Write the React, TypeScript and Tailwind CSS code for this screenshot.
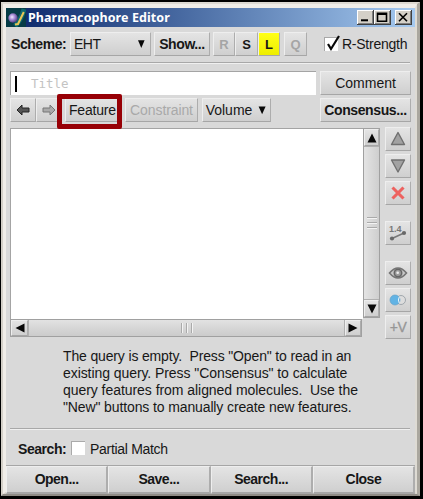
import React from "react";

const raised =
  "flex shrink-0 items-center justify-center whitespace-nowrap border border-t-[#eeeeee] border-l-[#eeeeee] border-r-[#adadad] border-b-[#a6a6a6] bg-linear-to-b from-[#e4e4e4] to-[#cfcfcf]";

function Btn({ className = "", children }: { className?: string; children?: React.ReactNode }) {
  return <div className={`${raised} ${className}`}>{children}</div>;
}

function Divider() {
  return <div className="ml-[4px] h-[2px] w-[400px] border-t border-b border-t-[#a8a8a8] border-b-[#f0f0f0]" />;
}

function Triangle({ d, className = "" }: { d: string; className?: string }) {
  return (
    <svg className={className} width="10" height="10" viewBox="0 0 10 10">
      <path d={d} fill="#080808" />
    </svg>
  );
}

function TitleBar() {
  return (
    <div className="flex h-[19px] w-[409px] items-center bg-linear-to-r from-[#0b2568] to-[#a6caf0]">
      <svg width="20" height="19" viewBox="0 0 20 19" className="shrink-0">
        <defs>
          <radialGradient id="ball" cx=".4" cy=".4" r=".65">
            <stop offset="0" stopColor="#f1e9ff" />
            <stop offset=".45" stopColor="#a58bd4" />
            <stop offset="1" stopColor="#493778" />
          </radialGradient>
        </defs>
        <rect width="20" height="19" fill="#063c46" />
        <path d="M9 18c5-5 7-9 9-17" stroke="#0d6770" strokeWidth="5" fill="none" />
        <circle cx="7" cy="10" r="4.7" fill="url(#ball)" />
        <path d="M9 16.5L12 16 17.8 4" stroke="#e8c655" strokeWidth="2" fill="none" />
      </svg>
      <span className="ml-[2px] w-[146px] whitespace-nowrap font-['Noto_Sans',sans-serif] text-[12.5px] leading-[19px] font-bold tracking-[0.08px] text-white">
        Pharmacophore Editor
      </span>
      <div className="ml-auto mr-[3px] flex">
        {["M4 11h7", "M3.5 4h9v8h-9zM3 5h10", "M4 4l8 8M12 4l-8 8"].map((d, i) => (
          <svg key={d} width="17" height="15" viewBox="0 0 17 15" className={i === 2 ? "ml-[4px]" : ""}>
            <rect width="17" height="15" fill="#404040" />
            <rect width="16" height="14" fill="#fff" />
            <rect x="1" y="1" width="15" height="13" fill="#808080" />
            <rect x="1" y="1" width="14" height="12" fill="#d4d0c8" />
            <path d={d} transform="translate(0 -.7)" stroke="#000" strokeWidth={i === 0 ? 2 : 1.6} fill="none" />
          </svg>
        ))}
      </div>
    </div>
  );
}

function SideTools() {
  const size = "h-[24px] w-[26px]";
  return (
    <div className="ml-[5px] flex w-[26px] flex-col gap-[3px]">
      <Btn className={size}>
        <svg width="18" height="16" viewBox="0 0 18 16"><path d="M9 1.5L15.5 13.5h-13z" fill="#a2a2a2" stroke="#707070" strokeWidth="1.4" strokeLinejoin="round" /></svg>
      </Btn>
      <Btn className={size}>
        <svg width="18" height="16" viewBox="0 0 18 16"><path d="M9 14L2.5 2h13z" fill="#a2a2a2" stroke="#707070" strokeWidth="1.4" strokeLinejoin="round" /></svg>
      </Btn>
      <Btn className={size}>
        <svg width="16" height="16" viewBox="0 0 16 16"><path d="M2.5 2.5l11 11M13.5 2.5l-11 11" stroke="#ed625f" strokeWidth="3.1" /></svg>
      </Btn>
      <Btn className={`${size} mt-[13px]`}>
        <svg width="22" height="20" viewBox="0 0 22 20">
          <path d="M5 15.5L17 10" stroke="#777" strokeWidth="1.4" />
          <circle cx="5" cy="15.5" r="2.1" fill="#686868" /><circle cx="17" cy="10" r="2.1" fill="#686868" />
          <text x="2" y="9" className="font-['Liberation_Sans',sans-serif] text-[9px] font-bold" fill="#777">1.4</text>
        </svg>
      </Btn>
      <Btn className={`${size} mt-[13px]`}>
        <svg width="20" height="16" viewBox="0 0 20 16">
          <path d="M1.5 8Q10-2 18.5 8Q10 18 1.5 8z" fill="#c9c9c9" stroke="#747474" strokeWidth="1.6" />
          <circle cx="10" cy="8" r="3.7" fill="#9d9d9d" stroke="#666" strokeWidth="1.6" /><circle cx="9.7" cy="7.7" r="1.3" fill="#eee" />
        </svg>
      </Btn>
      <Btn className={size}>
        <svg width="20" height="16" viewBox="0 0 20 16">
          <circle cx="13" cy="8" r="4.5" fill="#ddd" stroke="#a0a7ad" /><circle cx="7" cy="8" r="5" fill="#62b3e4" stroke="#66a2c8" strokeWidth=".7" />
          <path d="M11.3 4.8Q9.5 8 11.3 11.2" stroke="#eef5f9" fill="none" />
        </svg>
      </Btn>
      <Btn className={`${size} text-[14px] tracking-[-0.6px] text-[#969696] [-webkit-text-stroke:0.3px]`}>+V</Btn>
    </div>
  );
}

export default function App() {
  return (
    <div className="flex h-[499px] w-[423px] bg-black pt-[2px] pl-[1px] font-['Liberation_Sans',Arial,sans-serif] text-[14px] leading-[17px] text-[#171717]">
      <div className="h-[494px] w-[419px] border-t-2 border-r-3 border-b-2 border-l-2 border-t-[#ddd9d2] border-r-[#aaa79f] border-b-[#8f8c86] border-l-[#d4d0c8]">
        <div className="h-[490px] w-[414px] border-2 border-t-4 border-l-3 border-[#f0ede8] border-r-[#dedbd4] border-b-[#d5d0c8] bg-[#d9d9d9]">
          <TitleBar />
          <div className="flex h-[35px] pt-[5px]">
            <span className="ml-[5px] w-[59px] pt-[4px] font-bold tracking-[-0.45px]">Scheme:</span>
            <Btn className="h-[24px] w-[81px] justify-between! pr-[4px] pl-[3px]">
              <span className="tracking-[-0.5px]">EHT</span><Triangle d="M2 1.2h6.6L5.3 9z" />
            </Btn>
            <Btn className="ml-[3px] h-[24px] w-[56px] font-bold tracking-[-0.4px]">Show...</Btn>
            <Btn className="ml-[3px] h-[24px] w-[22px] text-[13px] font-bold text-[#a5a5a5]">R</Btn>
            <Btn className="h-[24px] w-[23px] text-[13px] font-bold">S</Btn>
            <Btn className="h-[24px] w-[22px] from-[#ffff16]! to-[#eeee00]! text-[13px] font-bold">L</Btn>
            <Btn className="ml-[4px] h-[24px] w-[23px] text-[13px] font-bold text-[#a5a5a5]">Q</Btn>
            <div className="relative mt-[5px] ml-[17px] h-[14px] w-[14px] border-t border-l border-[#a8a8a8] bg-white">
              <svg className="absolute -top-[5px] left-0" width="17" height="19" viewBox="0 0 17 19"><path d="M3 11l3 5L14 3" stroke="#080808" strokeWidth="2.2" fill="none" /></svg>
            </div>
            <span className="ml-[4px] pt-[4px] tracking-[-0.25px] whitespace-nowrap">R-Strength</span>
          </div>
          <Divider />
          <div className="mt-[7px] ml-[4px] flex h-[24px]">
            <div className="flex h-[24px] w-[306px] items-center border-t border-l border-[#a4a4a4] bg-white">
              <span className="ml-[4px] h-[16px] w-[2px] bg-black" />
              <span className="ml-[14px] font-['DejaVu_Sans_Mono',monospace] text-[12.5px] text-[#c3c3c3]">Title</span>
            </div>
            <Btn className="ml-[4px] h-[24px] w-[91px]">Comment</Btn>
          </div>
          <div className="relative mt-[3px] ml-[4px] flex h-[25px]">
            <Btn className="h-[24px] w-[26px]">
              <svg width="14" height="12" viewBox="0 0 14 12"><path d="M1 6l5-5v3h7v4H6v3z" fill="#555" stroke="#242424" strokeLinejoin="round" /></svg>
            </Btn>
            <Btn className="h-[24px] w-[25px]">
              <svg width="14" height="12" viewBox="0 0 14 12"><path d="M13 6L8 1v3H1v4h7v3z" fill="#aaa" stroke="#777" strokeLinejoin="round" /></svg>
            </Btn>
            <Btn className="ml-[4px] h-[24px] w-[57px] justify-start! pl-[3px] tracking-[-0.2px]">Feature</Btn>
            <div className="absolute -top-[4px] left-[47px] h-[35px] w-[65px] rounded-[2px] border-5 border-[#970006]" />
            <Btn className="ml-[3px] h-[24px] w-[73px] tracking-[-0.1px] text-[#a9a9a9]">Constraint</Btn>
            <Btn className="ml-[4px] h-[24px] w-[69px] gap-[5px]">
              <span>Volume</span><Triangle d="M1.6 1.5h7L5.1 9.3z" />
            </Btn>
            <Btn className="ml-[49px] h-[24px] w-[91px] font-bold tracking-[-0.4px]">Consensus...</Btn>
          </div>
          <div className="mt-[4px] ml-[4px] flex h-[212px]">
            <div className="mt-[1px] w-[370px]">
              <div className="flex h-[191px]">
                <div className="w-[353px] border-t border-l border-[#a4a4a4] bg-white" />
                <div className="flex h-[190px] w-[17px] flex-col border border-[#a0a0a0]">
                  <Btn className="h-[17px]"><Triangle d="M5 .5l4.5 9h-9z" /></Btn>
                  <div className="flex flex-1 flex-col items-center justify-center gap-[3px] border-y border-[#b0b0b0] bg-linear-to-r from-[#e4e4e4] to-[#cecece]">
                    {[0, 1, 2].map((i) => <span key={i} className="h-[2px] w-[10px] border-t border-t-[#aaa] bg-[#f3f3f3]" />)}
                  </div>
                  <Btn className="h-[17px]"><Triangle d="M5 9.5L.5.5h9z" /></Btn>
                </div>
              </div>
              <div className="flex h-[18px] w-[352px] border border-[#a0a0a0]">
                <Btn className="w-[17px]"><Triangle d="M.5 5l9-4.5v9z" /></Btn>
                <div className="flex flex-1 items-center justify-center gap-[3px] border-x border-[#b0b0b0] bg-linear-to-b from-[#e2e2e2] to-[#cbcbcb]">
                  {[0, 1, 2].map((i) => <span key={i} className="h-[10px] w-[2px] border-l border-l-[#aaa] bg-[#f3f3f3]" />)}
                </div>
                <Btn className="w-[16px]"><Triangle d="M9.5 5L.5.5v9z" /></Btn>
              </div>
            </div>
            <SideTools />
          </div>
          <div className="mt-[9px] ml-[57px] h-[80px] whitespace-pre">
            <p className="tracking-[-0.15px]">{'The query is empty.  Press "Open" to read in an'}</p>
            <p className="tracking-[-0.07px]">{'existing query. Press "Consensus" to calculate'}</p>
            <p className="tracking-[-0.05px]">{"query features from aligned molecules.  Use the"}</p>
            <p className="tracking-[-0.12px]">{'"New" buttons to manually create new features.'}</p>
          </div>
          <Divider />
          <div className="flex h-[35px] pt-[11px]">
            <span className="ml-[12px] w-[53px] font-bold tracking-[-0.45px]">Search:</span>
            <span className="h-[14px] w-[14px] border-t border-l border-[#aaa] bg-white" />
            <span className="ml-[5px] tracking-[-0.3px]">Partial Match</span>
          </div>
          <div className="flex h-[29px] border-t border-[#a6a6a6]">
            {["Open...", "Save...", "Search...", "Close"].map((label) => (
              <Btn key={label} className="h-[28px] w-[102.25px] border-r-2 border-b-2 font-bold tracking-[-0.5px]">{label}</Btn>
            ))}
          </div>
        </div>
      </div>
    </div>
  );
}
